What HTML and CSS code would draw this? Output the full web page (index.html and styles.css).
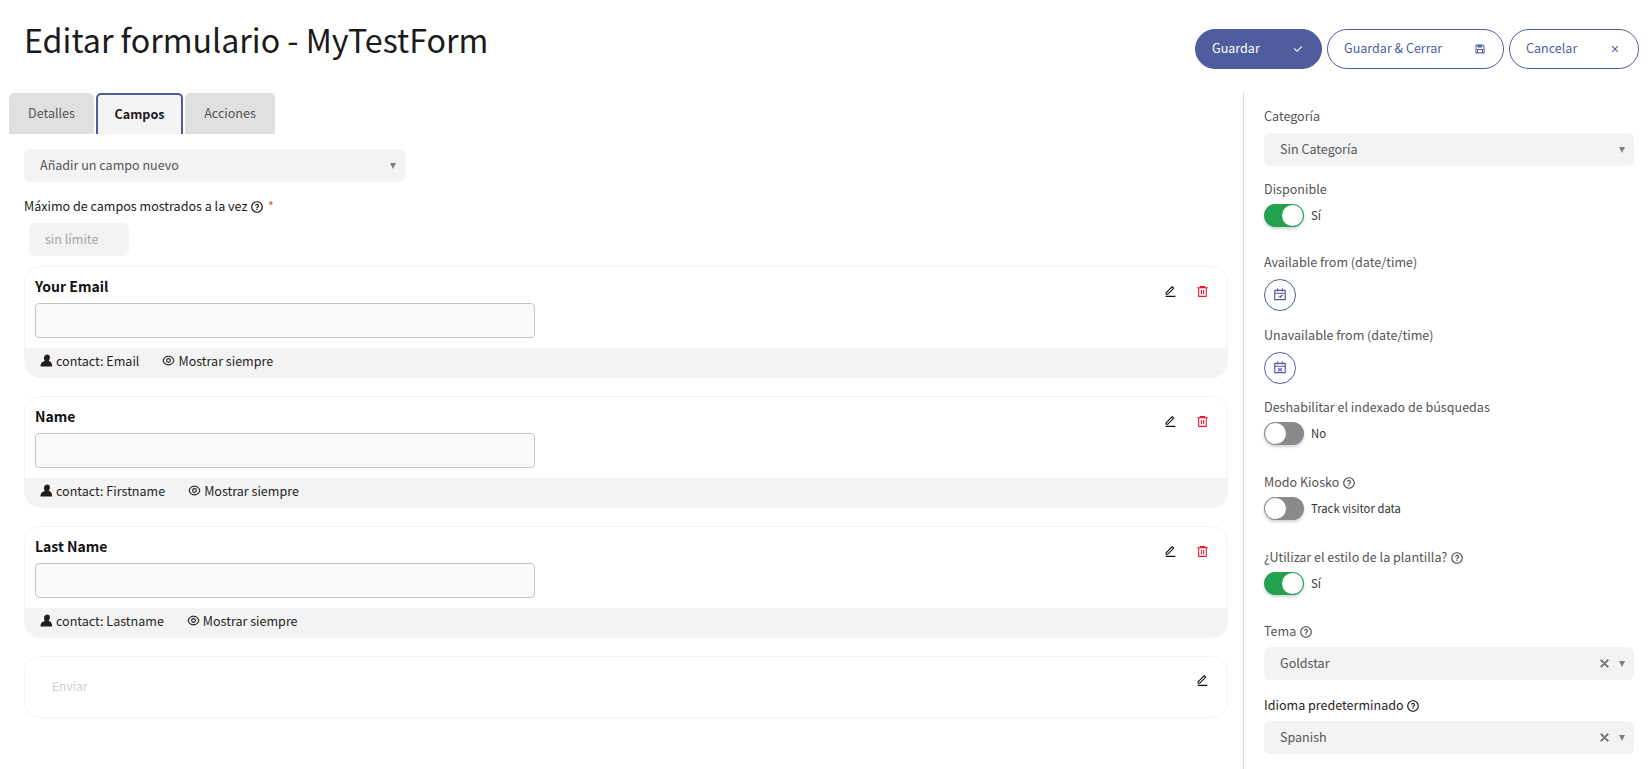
FILE: index.html
```html
<!DOCTYPE html>
<html lang="es">
<head>
<meta charset="utf-8">
<title>Editar formulario - MyTestForm</title>
<link rel="stylesheet" href="styles.css">
</head>
<body>
<svg class="defs" aria-hidden="true">
  <symbol id="i-q" viewBox="0 0 24 24"><path d="M12 22C6.477 22 2 17.523 2 12S6.477 2 12 2s10 4.477 10 10-4.477 10-10 10zm0-2a8 8 0 1 0 0-16 8 8 0 0 0 0 16zm-1-5h2v2h-2v-2zm2-1.645V14h-2v-1.500a1 1 0 0 1 1-1 1.500 1.500 0 1 0-1.471-1.794l-1.962-.393A3.501 3.501 0 1 1 13 13.355z"/></symbol>
  <symbol id="i-eye" viewBox="0 0 24 24"><path d="M12 3c5.392 0 9.878 3.880 10.819 9-.940 5.120-5.427 9-10.819 9-5.392 0-9.878-3.880-10.819-9C2.121 6.880 6.608 3 12 3zm0 16a9.005 9.005 0 0 0 8.777-7 9.005 9.005 0 0 0-17.554 0A9.005 9.005 0 0 0 12 19zm0-2.500a4.500 4.500 0 1 1 0-9 4.500 4.500 0 0 1 0 9zm0-2a2.500 2.500 0 1 0 0-5 2.500 2.500 0 0 0 0 5z"/></symbol>
  <symbol id="i-bin" viewBox="0 0 24 24"><path d="M7 4V2h10v2h5v2h-2v15a1 1 0 0 1-1 1H5a1 1 0 0 1-1-1V6H2V4h5zM6 6v14h12V6H6zm3 3h2v8H9V9zm4 0h2v8h-2V9z"/></symbol>
  <symbol id="i-edit" viewBox="0 0 24 24"><path d="M6.414 16L16.556 5.858l-1.414-1.414L5 14.586V16h1.414zm.829 2H3v-4.243L14.435 2.322a1 1 0 0 1 1.414 0l2.829 2.829a1 1 0 0 1 0 1.414L7.243 18zM3 20h18v2H3v-2z"/></symbol>
  <symbol id="i-save" viewBox="0 0 24 24"><path d="M18 19h1V6.828L17.172 5H16v4H7V5H5v14h1v-7h12v7zM4 3h14l2.707 2.707a1 1 0 0 1 .293.707V20a1 1 0 0 1-1 1H4a1 1 0 0 1-1-1V4a1 1 0 0 1 1-1zm4 11v5h8v-5H8z"/></symbol>
  <symbol id="i-check" viewBox="0 0 24 24"><path d="M10 15.172l9.192-9.193 1.415 1.414L10 18l-6.364-6.364 1.414-1.414z"/></symbol>
  <symbol id="i-close" viewBox="0 0 24 24"><path d="M12 10.586l4.950-4.950 1.414 1.414-4.950 4.950 4.950 4.950-1.414 1.414-4.950-4.950-4.950 4.950-1.414-1.414 4.950-4.950-4.950-4.950L7.050 5.636z"/></symbol>
  <symbol id="i-user" viewBox="0 0 24 24"><path d="M1 23c0-4 .5-6.500 3-8 1.500-1 3.500-1.500 5-2.500C7.500 11 7 9 7.500 6 8 3 10.500 1 13.500 1c3 0 5 2.300 4.800 5.500-.1 2.500-.8 4.300-2.300 6 2.500 1 6.500 2.500 6.500 10.500H1z"/></symbol>
  <symbol id="i-cal-check" viewBox="0 0 24 24"><path d="M9 1v2h6V1h2v2h4a1 1 0 0 1 1 1v16a1 1 0 0 1-1 1H3a1 1 0 0 1-1-1V4a1 1 0 0 1 1-1h4V1h2zm11 9H4v9h16v-9zm-4.050 1.136l1.414 1.414-4.950 4.950-3.536-3.536L9.293 13l2.122 2.122 3.535-3.536zM7 5H4v3h16V5h-3v1h-2V5H9v1H7V5z"/></symbol>
  <symbol id="i-cal-x" viewBox="0 0 24 24"><path d="M9 1v2h6V1h2v2h4a1 1 0 0 1 1 1v16a1 1 0 0 1-1 1H3a1 1 0 0 1-1-1V4a1 1 0 0 1 1-1h4V1h2zm11 9H4v9h16v-9zM9.400 11.400l2.600 2.200 2.600-2.200 1.300 1.400-2.400 2.200 2.400 2.200-1.300 1.400-2.600-2.200-2.600 2.200-1.300-1.400 2.400-2.200-2.400-2.200 1.300-1.400zM7 5H4v3h16V5h-3v1h-2V5H9v1H7V5z"/></symbol>
</svg>

<header class="top">
  <h1 class="title">Editar formulario - MyTestForm</h1>
  <div class="actions">
    <button class="btn btn-solid btn-save"><span>Guardar</span><svg class="ic-12"><use href="#i-check"/></svg></button>
    <button class="btn btn-close"><span>Guardar &amp; Cerrar</span><svg class="ic-12"><use href="#i-save"/></svg></button>
    <button class="btn btn-cancel"><span>Cancelar</span><svg class="ic-12"><use href="#i-close"/></svg></button>
  </div>
</header>

<main class="layout">
  <section class="left">
    <nav class="tabs">
      <a class="tab tab-details">Detalles</a>
      <a class="tab tab-active">Campos</a>
      <a class="tab tab-actions">Acciones</a>
    </nav>
    <div class="pane">
      <div class="select select-add"><span>Añadir un campo nuevo</span><i class="caret"></i></div>
      <label class="max-label">Máximo de campos mostrados a la vez <svg class="ic-q"><use href="#i-q"/></svg> <em class="req">*</em></label>
      <div class="limit">sin límite</div>

      <article class="card">
        <div class="card-body">
          <div class="card-main">
            <div class="card-title">Your Email</div>
            <div class="fake-input"></div>
          </div>
          <div class="card-tools"><svg class="ic-edit"><use href="#i-edit"/></svg><svg class="ic-bin"><use href="#i-bin"/></svg></div>
        </div>
        <div class="card-foot"><span class="meta"><svg class="ic-meta"><use href="#i-user"/></svg>contact: Email</span><span class="meta"><svg class="ic-meta"><use href="#i-eye"/></svg>Mostrar siempre</span></div>
      </article>

      <article class="card">
        <div class="card-body">
          <div class="card-main">
            <div class="card-title">Name</div>
            <div class="fake-input"></div>
          </div>
          <div class="card-tools"><svg class="ic-edit"><use href="#i-edit"/></svg><svg class="ic-bin"><use href="#i-bin"/></svg></div>
        </div>
        <div class="card-foot"><span class="meta"><svg class="ic-meta"><use href="#i-user"/></svg>contact: Firstname</span><span class="meta"><svg class="ic-meta"><use href="#i-eye"/></svg>Mostrar siempre</span></div>
      </article>

      <article class="card">
        <div class="card-body">
          <div class="card-main">
            <div class="card-title">Last Name</div>
            <div class="fake-input"></div>
          </div>
          <div class="card-tools"><svg class="ic-edit"><use href="#i-edit"/></svg><svg class="ic-bin"><use href="#i-bin"/></svg></div>
        </div>
        <div class="card-foot"><span class="meta"><svg class="ic-meta"><use href="#i-user"/></svg>contact: Lastname</span><span class="meta"><svg class="ic-meta"><use href="#i-eye"/></svg>Mostrar siempre</span></div>
      </article>

      <article class="card card-submit">
        <span class="submit-text">Enviar</span>
        <svg class="ic-edit"><use href="#i-edit"/></svg>
      </article>
    </div>
  </section>

  <aside class="side">
    <div class="field f-select">
      <label class="lbl">Categoría</label>
      <div class="select"><span>Sin Categoría</span><i class="caret"></i></div>
    </div>
    <div class="field f-toggle">
      <label class="lbl">Disponible</label>
      <div class="switch-row"><span class="switch on"></span><span class="switch-text">Sí</span></div>
    </div>
    <div class="field f-date">
      <label class="lbl">Available from (date/time)</label>
      <span class="round"><svg class="ic-cal"><use href="#i-cal-check"/></svg></span>
    </div>
    <div class="field f-date">
      <label class="lbl">Unavailable from (date/time)</label>
      <span class="round"><svg class="ic-cal"><use href="#i-cal-x"/></svg></span>
    </div>
    <div class="field f-toggle f-long">
      <label class="lbl">Deshabilitar el indexado de búsquedas</label>
      <div class="switch-row"><span class="switch"></span><span class="switch-text">No</span></div>
    </div>
    <div class="field f-toggle f-long">
      <label class="lbl">Modo Kiosko <svg class="ic-q"><use href="#i-q"/></svg></label>
      <div class="switch-row"><span class="switch"></span><span class="switch-text">Track visitor data</span></div>
    </div>
    <div class="field f-toggle">
      <label class="lbl">¿Utilizar el estilo de la plantilla? <svg class="ic-q"><use href="#i-q"/></svg></label>
      <div class="switch-row"><span class="switch on"></span><span class="switch-text">Sí</span></div>
    </div>
    <div class="field f-select f-low">
      <label class="lbl">Tema <svg class="ic-q"><use href="#i-q"/></svg></label>
      <div class="select"><span>Goldstar</span><svg class="clear"><use href="#i-close"/></svg><i class="caret"></i></div>
    </div>
    <div class="field f-select f-low">
      <label class="lbl lbl-dark">Idioma predeterminado <svg class="ic-q"><use href="#i-q"/></svg></label>
      <div class="select"><span>Spanish</span><svg class="clear"><use href="#i-close"/></svg><i class="caret"></i></div>
    </div>
  </aside>
</main>
</body>
</html>
```

FILE: styles.css
```css
* { box-sizing: border-box; }
html, body { margin: 0; padding: 0; background: #fff; }
body {
  width: 1648px;
  height: 769px;
  overflow: hidden;
  font-family: "Noto Sans CJK SC", "Noto Sans", sans-serif;
  font-size: 12.55px;
  line-height: 20px;
  color: #1a1a1a;
}
.defs { display: none; }
svg { fill: currentColor; flex: none; }

.top { display: flex; justify-content: space-between; height: 93px; padding: 14px 9px 0 24px; }
.title { margin: 0; font-size: 32.2px; line-height: 50px; font-weight: 400; color: #1a1a1a; }
.actions { display: flex; gap: 5px; padding-top: 15px; }
.btn {
  display: flex; align-items: center; justify-content: space-between;
  height: 40px; padding: 0 17px 0 16px; border: 1px solid #4f5d9e; border-radius: 20px;
  background: #fff; color: #4f5d9e; font: inherit;
}
.btn span { padding-bottom: 2px; }
.btn-solid { background: #4f5d9e; color: #fff; }
.btn-save { width: 127px; }
.btn-close { width: 177px; }
.btn-cancel { width: 130px; }
.ic-12 { width: 12px; height: 12px; }

.layout { display: flex; }
.left { width: 1243px; }
.tabs { display: flex; gap: 2px; padding-left: 9px; }
.tab {
  display: flex; align-items: center; justify-content: center;
  height: 41px; padding-bottom: 2px; border-radius: 5px 5px 0 0; background: #e0e0e0; color: #555;
}
.tab-details { width: 85px; }
.tab-actions { width: 90px; }
.tab-active {
  width: 87px; background: #f3f3f3; color: #1a1a1a; font-weight: 700;
  border: 2px solid #4f5d9e; border-bottom: 0;
}
.pane { padding: 15px 15px 0 24px; }

.select {
  display: flex; align-items: center; height: 33px; padding: 0 8px 0 16px;
  border-radius: 6px; background: #f3f3f3; color: #555;
}
.select span { flex: 1; padding-bottom: 2px; }
.select-add { width: 381px; }
.caret {
  width: 0; height: 0; margin-right: 1px;
  border-left: 3.500px solid transparent; border-right: 3.500px solid transparent; border-top: 6px solid #808080;
}
.clear { width: 15px; height: 15px; margin-right: 7px; color: #777; stroke: #777; stroke-width: 1.5px; }

.max-label { display: block; margin-top: 14px; height: 20px; }
.ic-q { width: 14px; height: 14px; vertical-align: -3px; }
.req { color: #e4572e; font-style: normal; margin-left: 1px; }
.limit {
  width: 100px; height: 33px; margin: 7px 0 10px 5px; padding: 0 16px 2px;
  display: flex; align-items: center; border-radius: 6px; background: #f3f3f3; color: #a3a3a3;
}

.card {
  height: 112px; margin-bottom: 18px;
  border: 1px solid #f3f3f3; border-radius: 16px; overflow: hidden;
  display: flex; flex-direction: column;
}
.card-body { flex: 1; display: flex; justify-content: space-between; padding: 8px 18px 0 10px; }
.card-main { width: 501px; }
.card-title { font-size: 14px; font-weight: 700; line-height: 22px; color: #111; }
.fake-input {
  width: 500px; height: 35px; margin-top: 6px;
  border: 1px solid #c4c4c4; border-radius: 4px; background: #fafafa;
}
.card-tools { display: flex; gap: 19px; padding-top: 10px; }
.ic-edit { width: 13px; height: 13px; color: #111; }
.ic-bin { width: 13px; height: 13px; color: #e8192c; }
.card-foot {
  display: flex; gap: 23px; align-items: center; height: 29px; padding: 0 15px 4px;
  background: #f3f3f3; color: #1f1f1f;
}
.meta { display: flex; align-items: center; gap: 3px; }
.ic-meta { width: 13px; height: 13px; }

.card-submit {
  height: 62px; flex-direction: row; justify-content: space-between; margin: 0;
  padding: 15px 18px 0 27px;
}
.submit-text { color: #cfcfcf; margin-top: 4px; line-height: 20px; font-size: 12px; }
.card-submit .ic-edit { margin-top: 2px; }

.side { width: 405px; height: 676px; border-left: 1px solid #d9d9d9; padding: 13px 14px 0 20px; }
.field { display: flow-root; }
.lbl { display: block; height: 20px; color: #555; }
.lbl-dark { color: #1f1f1f; }
.f-select { height: 74px; }
.f-select .select { margin-top: 7px; }
.f-low .lbl { margin-top: 1px; }
.f-low .select { margin-top: 6px; }
.f-toggle { height: 72px; }
.f-toggle .lbl { margin-top: -1px; }
.f-long { height: 75px; }
.f-date { height: 73px; }
.switch-row { display: flex; align-items: center; gap: 7px; margin-top: 5px; }
.switch {
  position: relative; width: 40px; height: 23px; border-radius: 12px; background: #8a8a8a;
  box-shadow: 0 2px 3px rgba(0,0,0,.18);
}
.switch::after {
  content: ""; position: absolute; left: 1px; top: 1px; width: 21px; height: 21px;
  border-radius: 50%; background: #fff;
}
.switch.on { background: #23a24d; }
.switch.on::after { left: 18px; }
.switch-text { font-size: 11.3px; color: #333; padding-bottom: 2px; }
.round {
  display: flex; align-items: center; justify-content: center;
  width: 32px; height: 32px; margin-top: 7px; border: 1px solid #4f5d9e; border-radius: 50%; color: #4f5d9e;
}
.ic-cal { width: 14px; height: 14px; }
```
